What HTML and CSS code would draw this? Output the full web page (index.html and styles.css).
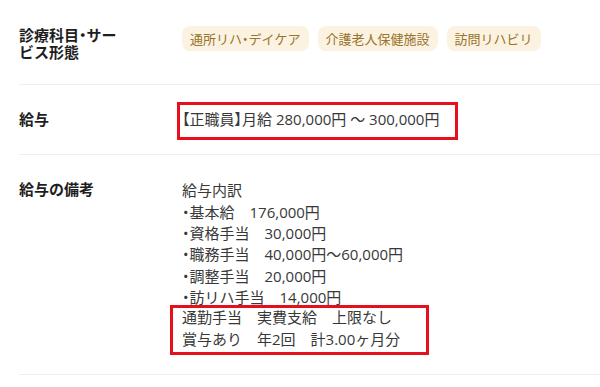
FILE: index.html
```html
<!DOCTYPE html>
<html lang="ja">
<head>
<meta charset="utf-8">
<link rel="stylesheet" href="styles.css">
</head>
<body>
<dl class="spec">
  <div class="row">
    <dt class="label">診療科目<span class="p">・</span>サービス形態</dt>
    <dd class="value">
      <ul class="tags">
        <li class="tag">通所リハ<span class="p">・</span>デイケア</li>
        <li class="tag">介護老人保健施設</li>
        <li class="tag">訪問リハビリ</li>
      </ul>
    </dd>
  </div>
  <div class="row">
    <dt class="label">給与</dt>
    <dd class="value salary">
      <span class="mark mark-salary"><span class="p">【</span>正職員<span class="p">】</span>月給 280,000円 ～ 300,000円</span>
    </dd>
  </div>
  <div class="row">
    <dt class="label">給与の備考</dt>
    <dd class="value notes">
      <div class="line">給与内訳</div>
      <div class="line"><span class="p">・</span>基本給　176,000円</div>
      <div class="line"><span class="p">・</span>資格手当　30,000円</div>
      <div class="line"><span class="p">・</span>職務手当　40,000円～60,000円</div>
      <div class="line"><span class="p">・</span>調整手当　20,000円</div>
      <div class="line"><span class="p">・</span>訪リハ手当　14,000円</div>
      <div class="mark mark-notes">
        <div class="line">通勤手当　実費支給　上限なし</div>
        <div class="line">賞与あり　年2回　計3.00ヶ月分</div>
      </div>
    </dd>
  </div>
</dl>
</body>
</html>
```

FILE: styles.css
```css
html, body {
  margin: 0;
  padding: 0;
  background: #ffffff;
}

body {
  font-family: "Noto Sans CJK JP", "Noto Sans", sans-serif;
  color: #222222;
  overflow: hidden;
}

.spec {
  margin: 0;
  padding: 1px 0 0 19px;
}

.row {
  display: grid;
  grid-template-columns: 105px 1fr;
  column-gap: 58px;
  align-items: start;
  padding: 25px 0 24px;
  border-bottom: 1px solid #efefef;
}

.label {
  margin: 0;
  font-size: 15px;
  font-weight: 700;
  line-height: 17px;
  color: #1e1e1e;
}

.value {
  margin: 0;
  font-family: "Open Sans", "Noto Sans CJK JP", sans-serif;
  font-size: 15px;
  color: #383838;
}

.p {
  font-family: "Noto Sans CJK JP", sans-serif;
  font-feature-settings: "palt";
}

.tags {
  display: flex;
  flex-wrap: wrap;
  gap: 9px;
  list-style: none;
  margin: 0;
  padding: 0;
}

.tag {
  font-family: "Noto Sans CJK JP", sans-serif;
  font-size: 13px;
  line-height: 17px;
  padding: 4px 8px;
  border-radius: 8px;
  background: #fbf2e2;
  color: #98742a;
}

.salary {
  line-height: 21.6px;
  height: 21.6px;
  margin-top: -2px;
}

.notes {
  line-height: 21.3px;
}

.notes .line {
  height: 21.3px;
  white-space: nowrap;
}

.mark {
  position: relative;
}

.mark-salary {
  display: inline-block;
  vertical-align: top;
  white-space: nowrap;
}

.mark-notes {
  display: block;
  width: fit-content;
}

.mark::after {
  content: "";
  position: absolute;
  border: 3px solid #e60f1c;
  pointer-events: none;
}

.mark-salary::after {
  top: -6px;
  bottom: -9px;
  left: -5px;
  right: -19px;
}

.mark-notes::after {
  top: -2px;
  bottom: -5px;
  left: -12px;
  right: -29px;
}
```
